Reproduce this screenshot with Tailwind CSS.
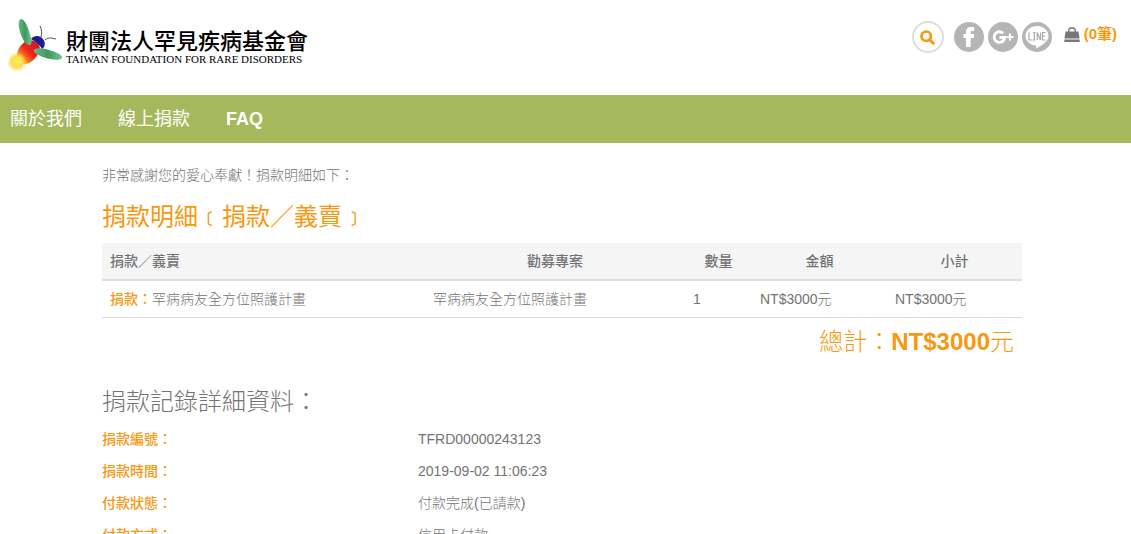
<!DOCTYPE html>
<html lang="zh-TW">
<head>
    <meta charset="UTF-8">
    <meta name="viewport" content="width=device-width, initial-scale=1.0">
    <title>財團法人罕見疾病基金會</title>
    <script src="https://cdn.jsdelivr.net/npm/@tailwindcss/browser@4"></script>
</head>
<body class="bg-white font-['Liberation_Sans','Noto_Sans_CJK_TC',sans-serif] text-sm leading-5 font-light text-[#737373]">

    <header class="flex h-[95px] items-start justify-between pr-[14px] pl-2">
        <a href="#" class="flex items-start pt-4 text-black">
            <svg class="h-[58px] w-[58px]" viewBox="8 16 58 58" aria-hidden="true">
                <defs>
                    <radialGradient id="glow"><stop offset="0" stop-color="#fff26a"/><stop offset=".55" stop-color="#fbdc48"/><stop offset="1" stop-color="#fbd648" stop-opacity="0"/></radialGradient>
                    <linearGradient id="body" x1="0" y1="1" x2="1" y2="0"><stop offset="0" stop-color="#ffd028"/><stop offset=".25" stop-color="#fa8a1c"/><stop offset=".5" stop-color="#ee2a1c"/><stop offset="1" stop-color="#c8102c"/></linearGradient>
                    <linearGradient id="wing"><stop offset="0" stop-color="#6cb58a"/><stop offset=".5" stop-color="#3c9a5c"/><stop offset="1" stop-color="#7fc095"/></linearGradient>
                </defs>
                <path d="M17 56C17 48 23 41 30 40C37 41 42 46 39 52C36 59 29 65 23 64C19 63 17 60 17 56Z" fill="url(#body)"/>
                <path d="M31 39C34 35 40 35 43 39C46 43 45 47 42 49C40 45 36 42 31 39Z" fill="#1c1c94"/>
                <circle cx="17" cy="62" r="10" fill="url(#glow)"/>
                <path d="M21 19C24 19 27 25 29 31C31 37 33 43 30 45C26 46 22 39 20 32C18 25 18 20 21 19Z" fill="url(#wing)"/>
                <path d="M34 50C36 47 45 48 52 51C59 53 63 56 62 58C60 61 51 60 43 57C37 55 33 52 34 50Z" fill="url(#wing)"/>
                <path d="M41 37C42 33 42 30 40 26M45 40C48 37 52 38 56 39" fill="none" stroke="#222" stroke-width=".8"/>
            </svg>
            <span class="pt-[11px]">
                <span class="block font-['Noto_Sans_CJK_TC',sans-serif] text-[22px] leading-6 font-medium">財團法人罕見疾病基金會</span>
                <span class="block font-['Liberation_Serif',serif] text-[11px] leading-4 font-normal">TAIWAN FOUNDATION FOR RARE DISORDERS</span>
            </span>
        </a>

        <div class="flex items-start pt-[21px]">
            <button type="button" aria-label="搜尋" class="mr-[10px] flex size-8 items-center justify-center rounded-full border-2 border-[#ddd]">
                <svg class="size-[15px]" viewBox="0 0 15 15" fill="none" stroke="#f7980f"><circle cx="6.200" cy="6.200" r="4.700" stroke-width="2.700"/><path d="M9.800 9.800l3.400 3.400" stroke-width="3" stroke-linecap="round"/></svg>
            </button>
            <div class="flex gap-1 pt-px">
                <a href="#" aria-label="Facebook">
                    <svg class="size-[30px]" viewBox="0 0 30 30"><circle cx="15" cy="15" r="15" fill="#b5b5b5"/><path d="M12 25V16H9.500V12H12V10C12 6.500 13.800 5 17 5H20.200V9H18.200C17 9 16.700 9.600 16.700 10.600V12H20.200L19.700 16H16.700V25Z" fill="#fff"/></svg>
                </a>
                <a href="#" aria-label="Google+">
                    <svg class="size-[30px]" viewBox="0 0 30 30"><circle cx="15" cy="15" r="15" fill="#b5b5b5"/><path d="M15.200 11.300A5.300 5.300 0 1 0 16.700 15.500H11.500" fill="none" stroke="#fff" stroke-width="2.900"/><path d="M22 11.500V18.500M18.500 15H25.500" stroke="#fff" stroke-width="2.200"/></svg>
                </a>
                <a href="#" aria-label="LINE">
                    <svg class="size-[30px]" viewBox="0 0 30 30"><circle cx="15" cy="15" r="15" fill="#b5b5b5"/><path d="M15 4C8.500 4 3.500 8.500 3.500 14C3.500 19 8 22.800 13.500 23.600C14.500 23.800 14.300 24.500 14 26.500C19 24 26.500 19.500 26.500 14C26.500 8.500 21.500 4 15 4Z" fill="#fff"/><path d="M7 10.500V18H10.200M11 10.500H13.600M12.300 10.500V18M11 18H13.600M15.200 18V10.500L18.500 18V10.500M23.500 10.500H20.500V18H23.500M20.500 14H23" fill="none" stroke="#aaa" stroke-width="1.200"/></svg>
                </a>
            </div>
            <a href="#" class="ml-3 flex items-center gap-1 pt-[3px] text-[15px] font-bold text-[#f7980f]">
                <svg class="h-[15px] w-4" viewBox="0 0 16 15" aria-hidden="true"><path d="M1.500 4.500H14.500L15.500 11.500H.5Z M.3 12.500H15.700V15H.3Z" fill="#777"/><path d="M4.700 6V4A3.300 3.300 0 0 1 11.300 4V6" fill="none" stroke="#777" stroke-width="1.400"/></svg>
                <span>(0筆)</span>
            </a>
        </div>
    </header>

    <nav class="flex h-12 items-center gap-9 bg-[#a5b95c] px-[10px] text-lg font-normal text-white">
        <a href="#">關於我們</a>
        <a href="#">線上捐款</a>
        <a href="#" class="font-bold">FAQ</a>
    </nav>

    <main class="pt-[22px] pr-[109px] pl-[102px]">
        <p>非常感謝您的愛心奉獻！捐款明細如下：</p>
        <h2 class="mt-4 text-2xl leading-8 font-normal text-[#f7980f]">捐款明細﹝捐款／義賣﹞</h2>

        <table class="mt-[10px] w-full table-fixed text-left">
            <colgroup>
                <col class="w-[323px]">
                <col class="w-[260px]">
                <col class="w-[67px]">
                <col class="w-[135px]">
                <col class="w-[135px]">
            </colgroup>
            <thead>
                <tr class="border-b-2 border-[#ddd] bg-[#f5f5f5] text-center">
                    <th class="p-2 text-left font-medium">捐款／義賣</th>
                    <th class="p-2 font-medium">勸募專案</th>
                    <th class="p-2 font-medium">數量</th>
                    <th class="p-2 font-medium">金額</th>
                    <th class="p-2 font-medium">小計</th>
                </tr>
            </thead>
            <tbody>
                <tr class="border-b border-[#ddd]">
                    <td class="p-2"><span class="font-medium text-[#f7980f]">捐款：</span>罕病病友全方位照護計畫</td>
                    <td class="p-2">罕病病友全方位照護計畫</td>
                    <td class="p-2">1</td>
                    <td class="p-2">NT$3000元</td>
                    <td class="p-2">NT$3000元</td>
                </tr>
            </tbody>
            <tfoot>
                <tr>
                    <td colspan="5" class="px-2 pt-2 text-right text-2xl leading-8 text-[#f7980f]">總計：<span class="font-bold">NT$3000</span>元</td>
                </tr>
            </tfoot>
        </table>

        <h2 class="mt-7 text-2xl leading-8">捐款記錄詳細資料：</h2>
        <dl class="mt-[11px] grid grid-cols-[316px_1fr] gap-y-3">
            <dt class="font-medium text-[#f7980f]">捐款編號：</dt>
            <dd>TFRD00000243123</dd>
            <dt class="font-medium text-[#f7980f]">捐款時間：</dt>
            <dd>2019-09-02 11:06:23</dd>
            <dt class="font-medium text-[#f7980f]">付款狀態：</dt>
            <dd>付款完成(已請款)</dd>
            <dt class="font-medium text-[#f7980f]">付款方式：</dt>
            <dd>信用卡付款</dd>
        </dl>
    </main>

</body>
</html>
